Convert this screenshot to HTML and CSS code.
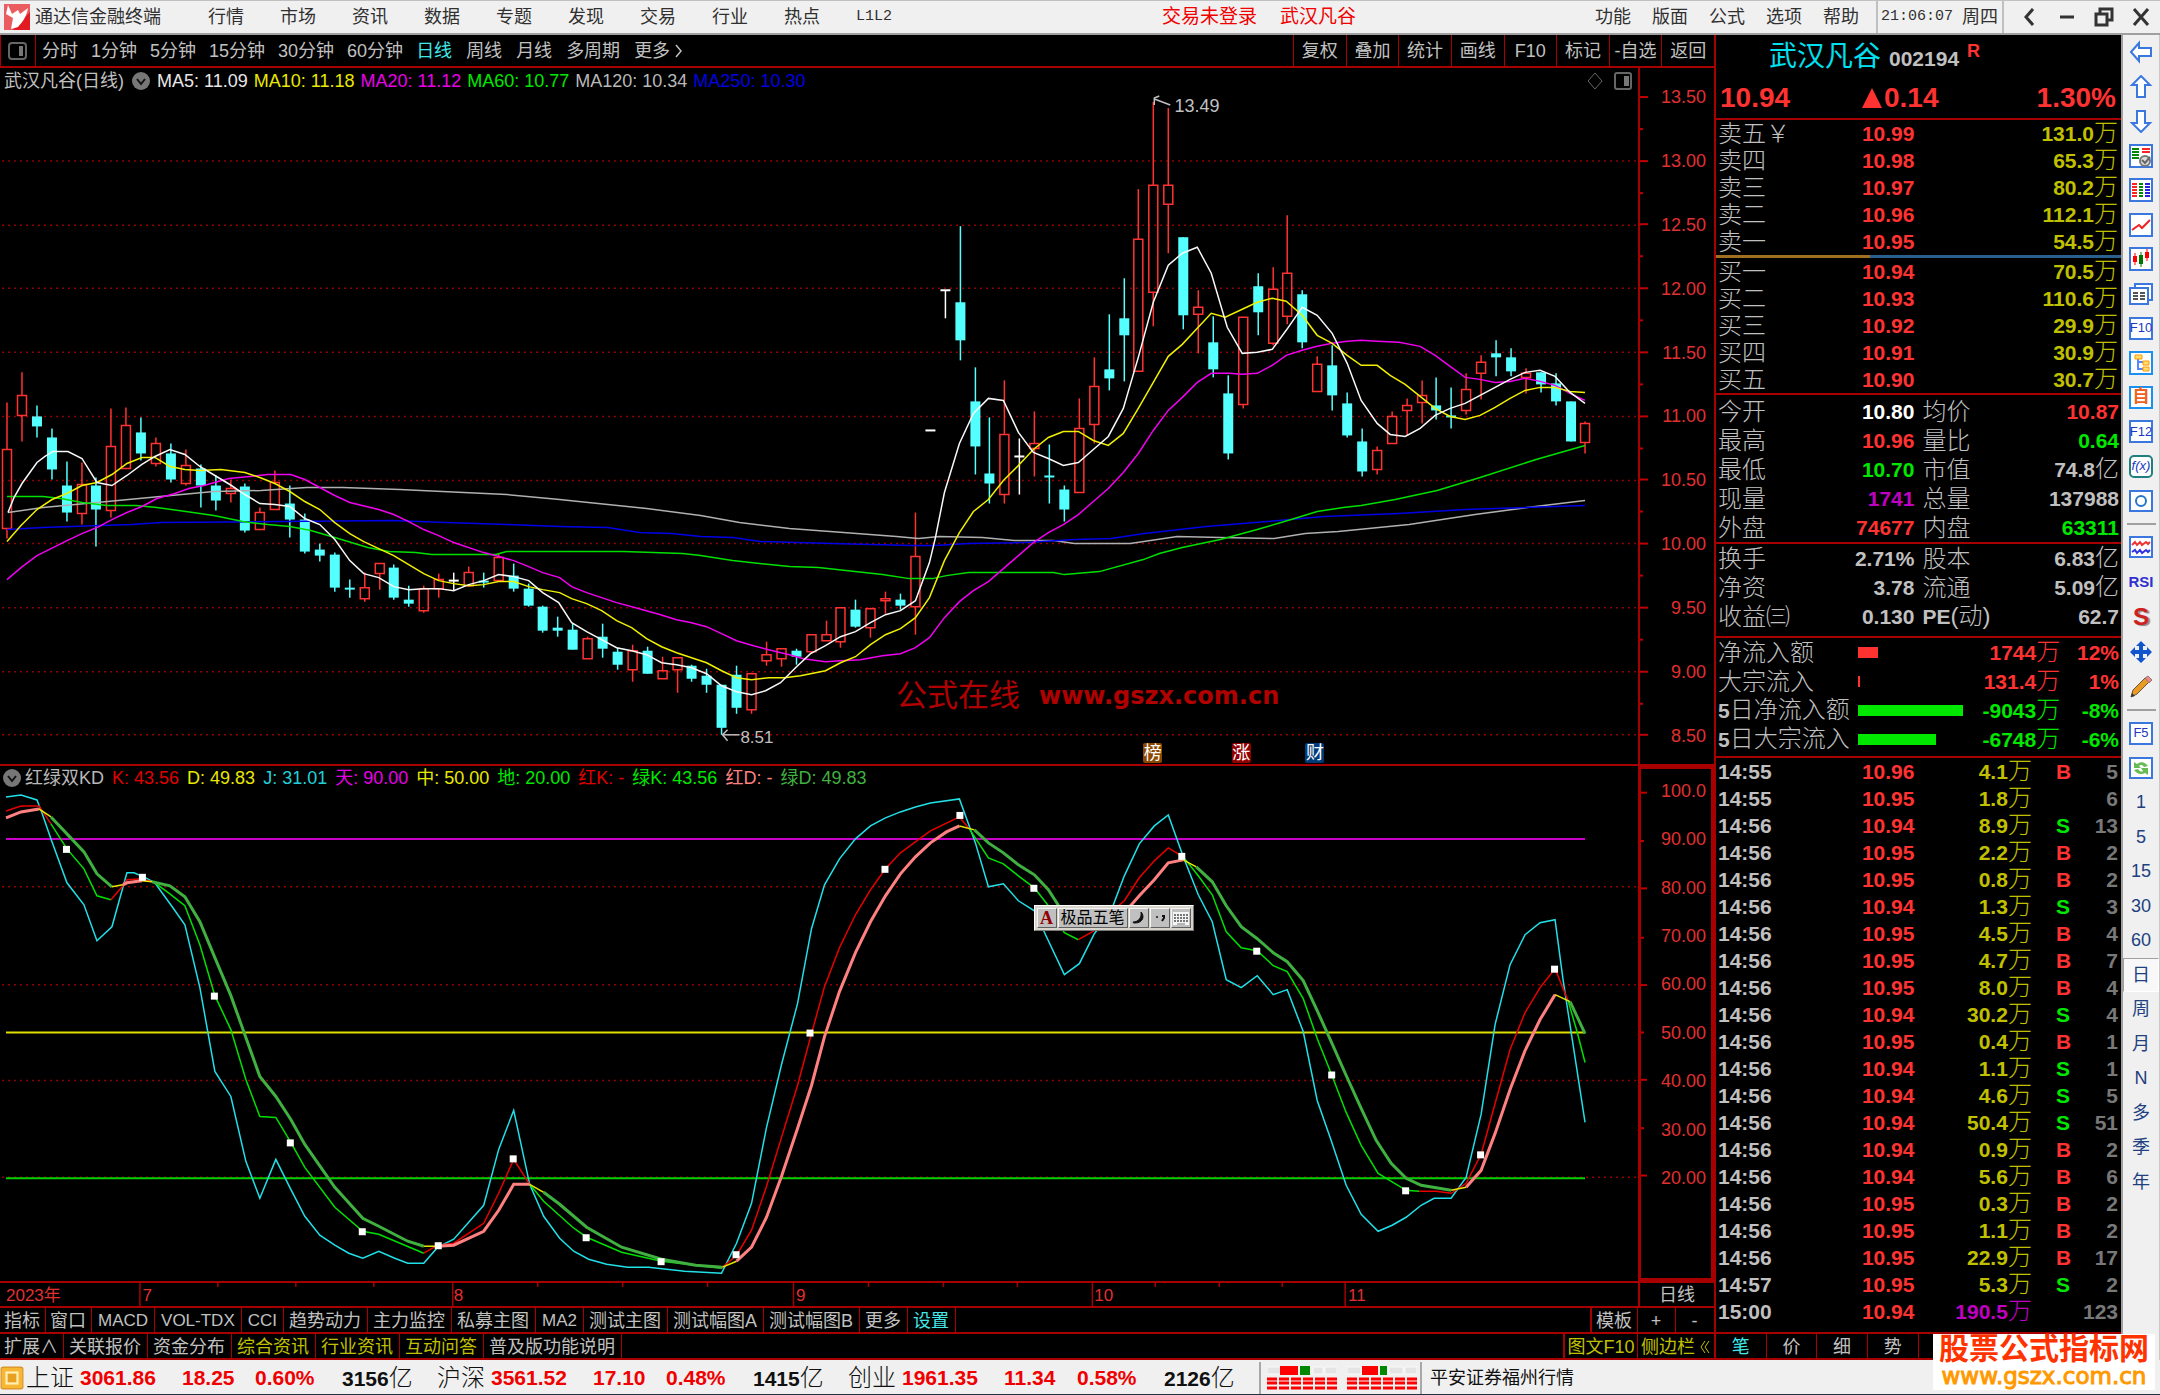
FILE: index.html
```html
<!DOCTYPE html>
<html lang="zh-CN">
<head>
<meta charset="utf-8">
<title>通达信金融终端</title>
<link rel="stylesheet" href="styles.css">
</head>
<body>
<div class="app">
  <header class="topbar">
    <svg class="logo" viewBox="0 0 26 26"><rect width="26" height="26" fill="#e21b22"/><path d="M0 0h26v8L9 26H0z" fill="#f0787a" opacity=".7"/><path d="M4 1l-2 9 7 4-2 11 7-2C19 17 22 14 24 4l-8 6-2-4-6 4z" fill="#fff"/></svg>
    <span class="title">通达信金融终端</span>
    <nav class="menu">
      <a href="#">行情</a><a href="#">市场</a><a href="#">资讯</a><a href="#">数据</a><a href="#">专题</a><a href="#">发现</a><a href="#">交易</a><a href="#">行业</a><a href="#">热点</a><a href="#" class="mono">L1L2</a>
    </nav>
    <div class="notice"><span>交易未登录</span><span>武汉凡谷</span></div>
    <nav class="menu-right"><a href="#">功能</a><a href="#">版面</a><a href="#">公式</a><a href="#">选项</a><a href="#">帮助</a></nav>
    <div class="clock"><span class="mono">21:06:07</span><span>周四</span></div>
    <div class="winctl">
      <button type="button" aria-label="收起"><svg viewBox="0 0 20 20"><path d="M13 2L6 10l7 8" fill="none" stroke="#333" stroke-width="3"/></svg></button>
      <button type="button" aria-label="最小化"><svg viewBox="0 0 20 20"><path d="M3 10h14" stroke="#333" stroke-width="3"/></svg></button>
      <button type="button" aria-label="还原"><svg viewBox="0 0 20 20"><path d="M2 7h11v11H2zM6 6V2h12v11h-5" fill="none" stroke="#333" stroke-width="3"/></svg></button>
      <button type="button" aria-label="关闭"><svg viewBox="0 0 20 20"><path d="M3 2l14 16M17 2L3 18" stroke="#333" stroke-width="3"/></svg></button>
    </div>
  </header>

  <div class="body">
    <main class="left">
      <div class="periodbar">
        <button type="button" class="sidebtn" aria-label="侧栏"><svg viewBox="0 0 20 18"><rect x="1" y="1" width="17" height="16" rx="3" fill="none" stroke="#666" stroke-width="2"/><rect x="11" y="4" width="4" height="10" fill="#777"/></svg></button>
        <div class="periods"><button type="button">分时</button><button type="button">1分钟</button><button type="button">5分钟</button><button type="button">15分钟</button><button type="button">30分钟</button><button type="button">60分钟</button></div>
        <div class="periods second"><button type="button" class="on">日线</button><button type="button">周线</button><button type="button">月线</button><button type="button">多周期</button><button type="button">更多 <svg class="more" viewBox="0 0 8 16"><path d="M1 2l5 6-5 6" fill="none" stroke="#c0c0c0" stroke-width="1.5"/></svg></button></div>
        <div class="tools"><button type="button">复权</button><button type="button">叠加</button><button type="button">统计</button><button type="button">画线</button><button type="button">F10</button><button type="button">标记</button><button type="button">-自选</button><button type="button">返回</button></div>
      </div>

      <section class="chart main-chart">
        <div class="plot">
          <svg id="kline" class="canvas" viewBox="0 68 1639 695" preserveAspectRatio="none"></svg>
          <div class="legend">
            <span class="name">武汉凡谷(日线)</span>
            <svg class="chev" viewBox="0 0 18 18"><circle cx="9" cy="9" r="9" fill="#777"/><path d="M5 7l4 5 4-5" fill="none" stroke="#111" stroke-width="2"/></svg>
            <span class="w">MA5: 11.09</span><span class="y">MA10: 11.18</span><span class="m">MA20: 11.12</span><span class="g">MA60: 10.77</span><span class="s">MA120: 10.34</span><span class="b">MA250: 10.30</span>
            <span class="legend-icons">
              <svg viewBox="0 0 18 18"><path d="M9 1l7 8-7 8-7-8z" fill="none" stroke="#666"/></svg>
              <svg viewBox="0 0 18 18"><rect x="1" y="1" width="16" height="16" rx="2" fill="none" stroke="#666" stroke-width="2"/><rect x="10" y="4" width="5" height="10" fill="#777"/></svg>
            </span>
          </div>
          <span class="mark high">13.49</span>
          <span class="mark low">8.51</span>
          <div class="ink"><span class="ink-cn">公式在线</span><span class="ink-url">www.gszx.com.cn</span></div>
          <span class="tag t1">榜</span><span class="tag t2">涨</span><span class="tag t3">财</span>
        </div>
        <div class="axis">
          <svg id="priceTicks" class="ticks" viewBox="0 68 10 695" preserveAspectRatio="none"></svg>
          <div class="labels price"><span>13.50</span><span>13.00</span><span>12.50</span><span>12.00</span><span>11.50</span><span>11.00</span><span>10.50</span><span>10.00</span><span>9.50</span><span>9.00</span><span>8.50</span></div>
        </div>
      </section>

      <section class="chart sub-chart">
        <div class="plot">
          <svg id="kd" class="canvas" viewBox="0 765 1639 516" preserveAspectRatio="none"></svg>
          <div class="legend sub">
            <svg class="chev" viewBox="0 0 18 18"><circle cx="9" cy="9" r="9" fill="#777"/><path d="M5 7l4 5 4-5" fill="none" stroke="#111" stroke-width="2"/></svg>
            <span class="s">红绿双KD</span><span class="r">K: 43.56</span><span class="y">D: 49.83</span><span class="c">J: 31.01</span><span class="m">天: 90.00</span><span class="y">中: 50.00</span><span class="g">地: 20.00</span><span class="r">红K: -</span><span class="g">绿K: 43.56</span><span class="p">红D: -</span><span class="dg">绿D: 49.83</span>
          </div>
          <div class="ime">
            <button type="button" class="ime-a">A</button><button type="button" class="ime-name">极品五笔</button>
            <button type="button" aria-label="半角"><svg viewBox="0 0 16 18"><path d="M10 3c4 4 2 11-6 11-1 0-2 0-2-1 5 0 9-4 8-10z" fill="#111" stroke="#111"/></svg></button>
            <button type="button" aria-label="标点"><svg viewBox="0 0 16 18"><circle cx="5" cy="8" r="1" fill="#111"/><path d="M10 7h2v2l-2 3" fill="none" stroke="#111" stroke-width="2"/></svg></button>
            <button type="button" aria-label="软键盘"><svg viewBox="0 0 16 18"><rect y="3" width="16" height="13" fill="#f4f4f4"/><path d="M1 6h14M1 9h14M1 12h14" stroke="#777" stroke-width="2" stroke-dasharray="2 1"/><path d="M4 15h8" stroke="#777"/></svg></button>
          </div>
        </div>
        <div class="axis boxed">
          <svg id="kdTicks" class="ticks" viewBox="0 765 10 516" preserveAspectRatio="none"></svg>
          <div class="labels kd"><span>100.0</span><span>90.00</span><span>80.00</span><span>70.00</span><span>60.00</span><span>50.00</span><span>40.00</span><span>30.00</span><span>20.00</span></div>
        </div>
      </section>

      <div class="dates">
        <div class="date-plot">
          <svg id="dateTicks" class="canvas" viewBox="0 0 1639 23" preserveAspectRatio="none"></svg>
          <span class="d0">2023年</span><span class="d7">7</span><span class="d8">8</span><span class="d9">9</span><span class="d10">10</span><span class="d11">11</span>
        </div>
        <span class="date-unit">日线</span>
      </div>

      <div class="tabs">
        <button type="button" class="tight">指标</button><button type="button" class="tight">窗口</button><button type="button" class="latin">MACD</button><button type="button" class="latin">VOL-TDX</button><button type="button" class="latin">CCI</button><button type="button">趋势动力</button><button type="button">主力监控</button><button type="button">私募主图</button><button type="button" class="latin">MA2</button><button type="button">测试主图</button><button type="button">测试幅图A</button><button type="button">测试幅图B</button><button type="button">更多</button><button type="button" class="on">设置</button>
        <span class="end"><button type="button" class="tight">模板</button><button type="button" class="sign">+</button><button type="button" class="sign">-</button></span>
      </div>
      <div class="tabs last">
        <button type="button" class="tight">扩展∧</button><button type="button">关联报价</button><button type="button">资金分布</button><button type="button" class="hot">综合资讯</button><button type="button" class="hot">行业资讯</button><button type="button" class="hot">互动问答</button><button type="button">普及版功能说明</button>
        <span class="end"><button type="button" class="hot f10">图文F10</button><button type="button" class="hot side">侧边栏<svg viewBox="0 0 12 16"><path d="M6 2L2 8l4 6M10 2L6 8l4 6" fill="none" stroke="#c0c000"/></svg></button></span>
      </div>
    </main>

    <aside class="quote">
      <h1 class="stock"><span class="cn">武汉凡谷</span><span class="code">002194</span><sup>R</sup></h1>
      <div class="last-price"><span class="price-now">10.94</span><span class="change"><svg viewBox="0 0 20 20"><path d="M10 0l10 20H0z" fill="#ff3232"/></svg>0.14</span><span class="percent">1.30%</span></div>
      <table class="book" id="asks"></table>
      <div class="ratio"><i></i></div>
      <table class="book" id="bids"></table>
      <table class="facts" id="facts1"></table>
      <table class="facts" id="facts2"></table>
      <table class="flow" id="flow"></table>
      <table class="deals" id="deals"></table>
      <div class="qtabs"><button type="button" class="on">笔</button><button type="button">价</button><button type="button">细</button><button type="button">势</button><i></i><i></i><i></i><i></i></div>
    </aside>

    <aside class="rail">
      <div class="rail-group long">
        <button type="button" aria-label="后退"><svg viewBox="0 0 24 24"><path d="M2 12l8-9v5h12v8H10v5z" class="arrow"/></svg></button>
        <button type="button" aria-label="上移"><svg viewBox="0 0 24 24"><path d="M12 1l9 9h-5v12H8V10H3z" class="arrow"/></svg></button>
        <button type="button" aria-label="下移"><svg viewBox="0 0 24 24"><path d="M12 23l9-9h-5V2H8v12H3z" class="arrow"/></svg></button>
        <button type="button" aria-label="自选报价"><svg viewBox="0 0 24 24"><rect x="1" y="1" width="22" height="22" class="frame"/><path d="M3 5h7M3 8h7M3 11h7M3 14h7" stroke="#080" stroke-width="2"/><path d="M13 5h8M13 8h8" stroke="#f22" stroke-width="2"/><circle cx="16" cy="17" r="5" fill="#ddd" stroke="#777" stroke-width="2"/><path d="M13 16l3 3 5-6" fill="none" stroke="#666" stroke-width="2"/></svg></button>
        <button type="button" aria-label="行情列表"><svg viewBox="0 0 24 24"><rect x="1" y="1" width="22" height="22" class="frame"/><g stroke-width="2" fill="none"><path d="M3 6h5M3 9h5M3 12h5M3 15h5M3 18h5" stroke="#f22"/><path d="M10 6h4M10 9h4M10 12h4M10 15h4M10 18h4" stroke="#080"/><path d="M16 6h5M16 9h5M16 12h5M16 15h5M16 18h5" stroke="#22d"/></g></svg></button>
        <button type="button" aria-label="分时图"><svg viewBox="0 0 24 24"><rect x="1" y="1" width="22" height="22" class="frame"/><path d="M3 17l7-5 3 3 8-8" fill="none" stroke="#e22" stroke-width="2"/></svg></button>
        <button type="button" aria-label="K线图"><svg viewBox="0 0 24 24"><rect x="1" y="1" width="22" height="22" class="frame"/><path d="M6 6v12M18 2v12" stroke="#f00"/><path d="M12 5v15" stroke="#070"/><path d="M4 9h4v6H4zM16 5h4v6h-4z" fill="#f00"/><path d="M10 8h4v9h-4z" fill="#070"/></svg></button>
        <button type="button" aria-label="多窗口"><svg viewBox="0 0 24 24"><path d="M6 6V2h17v16h-4" class="frame"/><rect x="1" y="6" width="18" height="16" class="frame"/><path d="M4 11h5M11 11h5M4 14h5M11 14h5M4 17h5M11 17h5" stroke="#555" stroke-width="2"/></svg></button>
        <button type="button" class="boxed-key">F10</button>
        <button type="button" aria-label="板块树"><svg viewBox="0 0 24 24"><rect x="1" y="1" width="22" height="22" class="frame cyan"/><path d="M9 8v10h5M9 11h5" fill="none" stroke="#58f" stroke-width="2"/><path d="M6 4h7v4H6zM14 10h6v4h-6zM14 16h6v4h-6z" fill="#fd6" stroke="#f90"/></svg></button>
        <button type="button" class="boxed-key self">自</button>
        <button type="button" class="boxed-key">F12</button>
        <button type="button" class="boxed-key fx">f(x)</button>
        <button type="button" aria-label="周期"><svg viewBox="0 0 24 24"><rect x="1" y="2" width="22" height="20" class="frame"/><circle cx="12" cy="12" r="5" fill="none" stroke="#27c" stroke-width="2"/></svg></button>
      </div>
      <hr>
      <div class="rail-group short">
        <button type="button" aria-label="叠加走势"><svg viewBox="0 0 24 24"><rect x="1" y="2" width="22" height="20" class="frame"/><path d="M3 10l3-3 2 3 3-3 2 3 4-3 2 2 2-2" fill="none" stroke="#e33" stroke-width="2"/><path d="M3 17l3-2 2 3 3-3 2 3 4-3 2 2 2-2" fill="none" stroke="#33d" stroke-width="2"/></svg></button>
        <button type="button" class="rsi">RSI</button>
        <button type="button" class="dollar">S</button>
        <button type="button" aria-label="移动"><svg viewBox="0 0 24 24"><path d="M12 1l5 5h-3v4h4V7l5 5-5 5v-3h-4v4h3l-5 5-5-5h3v-4H6v3l-5-5 5-5v3h4V6H7z" fill="#15c"/></svg></button>
        <button type="button" aria-label="画线工具"><svg viewBox="0 0 24 24"><path d="M2 22l2-7L16 3l4 4L8 19z" fill="#e99a20" stroke="#654" /><path d="M16 3l3-2 4 4-3 3z" fill="#e88" stroke="#977"/><path d="M2 22l1-4 3 3z" fill="#333"/></svg></button>
      </div>
      <hr>
      <div class="rail-group long">
        <button type="button" class="boxed-key">F5</button>
        <button type="button" aria-label="刷新"><svg viewBox="0 0 24 24"><rect x="1" y="2" width="22" height="20" class="frame"/><path d="M5 12V6l3 2c4-3 8-2 11 2l-4 1c-2-3-4-2-5-1l2 2zM19 12v7l-3-2c-4 2-8 1-11-3l4-1c2 3 4 3 5 2l-2-3z" fill="#6b5"/></svg></button>
        <button type="button">1</button><button type="button">5</button><button type="button">15</button><button type="button">30</button><button type="button">60</button><button type="button" class="pressed">日</button><button type="button">周</button><button type="button">月</button><button type="button">N</button><button type="button">多</button><button type="button">季</button><button type="button">年</button>
      </div>
    </aside>
  </div>

  <footer class="status">
    <svg class="status-icon" viewBox="0 0 22 22"><rect x="1" y="1" width="20" height="20" rx="2" fill="#f7b733" stroke="#d8912a"/><rect x="5" y="5" width="12" height="12" fill="#fff0b8"/><rect x="7" y="7" width="8" height="8" fill="#e8a020"/></svg>
    <dl class="index"><dt>上证</dt><dd class="c1">3061.86</dd><dd class="c2">18.25</dd><dd class="c3">0.60%</dd><dd class="c4"><b>3156</b>亿</dd></dl>
    <dl class="index"><dt>沪深</dt><dd class="c1">3561.52</dd><dd class="c2">17.10</dd><dd class="c3">0.48%</dd><dd class="c4"><b>1415</b>亿</dd></dl>
    <dl class="index"><dt>创业</dt><dd class="c1">1961.35</dd><dd class="c2">11.34</dd><dd class="c3">0.58%</dd><dd class="c4"><b>2126</b>亿</dd></dl>
    <div class="breadth">
      <svg viewBox="0 0 70 24"><path d="M0 1h14v7H0zM46 1h10v7H46zM58 1h12v7H58z" fill="#e4e4e4" stroke="#fafafa"/><path d="M13 0h18v9H13z" fill="#f00"/><path d="M33 0h10v9H33z" fill="#080"/><path d="M0 13h70M0 17h70M0 22h70" stroke="#f00" stroke-width="3" stroke-dasharray="10 2"/></svg>
      <svg viewBox="0 0 70 24"><path d="M0 1h14v7H0zM42 1h14v7H42zM58 1h12v7H58z" fill="#e4e4e4" stroke="#fafafa"/><path d="M15 0h16v9H15z" fill="#f00"/><path d="M33 0h7v9H33z" fill="#080"/><path d="M0 13h70M0 17h70M0 22h70" stroke="#f00" stroke-width="3" stroke-dasharray="10 2"/></svg>
    </div>
    <span class="server">平安证券福州行情</span>
  </footer>

  <a class="badge" href="#"><span class="badge-cn">股票公式指标网</span><span class="badge-url">www.gszx.com.cn</span></a>
</div>
<script src="app.js"></script>
</body>
</html>
```
FILE: styles.css
```css
* { box-sizing: border-box; }
body {
  margin: 0;
  background: #f0f0f0;
  color: #c0c0c0;
  font: 400 18px/20px "Liberation Sans", "Noto Sans CJK SC", sans-serif;
}
button {
  margin: 0; padding: 0; border: 0; background: none;
  color: inherit; font: inherit; white-space: nowrap;
}
a { color: inherit; text-decoration: none; }
table { border-collapse: separate; border-spacing: 0; width: 100%; }
td, th { padding: 0; font-weight: inherit; text-align: left; white-space: nowrap; }
svg { display: block; }
.mono { font-family: "Liberation Mono", monospace; font-size: 15px; }
.app { position: relative; display: flex; flex-direction: column; min-height: 100vh; }

/* top bar */
.topbar {
  display: flex; align-items: center; height: 35px;
  border-top: 1px solid #c0c0c0; border-bottom: 2px solid #a0a0a0;
  background: #f0f0f0; color: #303030; padding-left: 4px; white-space: nowrap;
}
.logo { width: 26px; height: 26px; margin-right: 5px; }
.title { width: 173px; }
.menu { display: flex; }
.menu a { width: 72px; }
.notice { display: flex; gap: 23px; flex: 1; padding-left: 234px; color: #f00000; font-size: 19px; }
.menu-right { display: flex; gap: 21px; padding-right: 17px; }
.clock {
  display: flex; align-items: center; gap: 9px; height: 32px; padding: 0 4px 0 3px;
  border-left: 2px solid #c0c0c0; border-right: 2px solid #c0c0c0;
}
.winctl { display: flex; gap: 17px; padding: 0 9px 0 16px; }
.winctl svg { width: 20px; height: 20px; }

.body { display: flex; flex: 1; }
.left { flex: 1; min-width: 0; display: flex; flex-direction: column; background: #000; }

/* period bar */
.periodbar { display: flex; height: 33px; border-bottom: 2px solid #a80000; align-items: center; white-space: nowrap; }
.sidebtn { width: 36px; height: 31px; padding-left: 7px; border-left: 1px solid #a80000; border-right: 1px solid #a80000; }
.sidebtn svg { width: 20px; height: 18px; }
.periods { display: flex; gap: 13px; padding-left: 6px; }
.periods.second { gap: 14px; padding-left: 13px; }
.periods .on, .tabs .on, .qtabs .on { color: #40e8e8; }
.more { display: inline-block; width: 8px; height: 16px; vertical-align: -2px; }
.tools { display: grid; grid-template-columns: repeat(8, 1fr); width: 421px; height: 31px; margin-left: auto; }
.tools button { border-left: 1px solid #a80000; }

/* charts */
.chart { display: flex; min-height: 0; }
.main-chart { flex: 697 1 0; border-bottom: 2px solid #a80000; }
.sub-chart { flex: 516 1 0; }
.plot { position: relative; flex: 1; min-width: 0; }
.canvas { position: absolute; left: 0; top: 0; width: 100%; height: 100%; }
.canvas *, .ticks * { vector-effect: non-scaling-stroke; }
.axis { position: relative; width: 76px; border-left: 2px solid #a80000; color: #e03030; }
.axis.boxed { border: 3px solid #a80000; }
.ticks { position: absolute; left: 0; top: 0; width: 10px; height: 100%; }
.labels { display: flex; flex-direction: column; justify-content: space-between; height: 100%; text-align: right; }
.labels.price { padding: 19px 8px 18px 0; }
.labels.kd { padding: 12px 5px 90px 0; }
.legend { position: relative; display: flex; align-items: center; gap: 6px; padding: 3px 6px 0 4px; white-space: nowrap; }
.legend.sub { gap: 4px; padding-top: 2px; padding-left: 3px; }
.legend.sub span { margin-right: 4px; }
.chev { width: 18px; height: 18px; }
.legend .name + .chev { margin: 0 1px 0 2px; }
.legend-icons { display: flex; gap: 10px; margin-left: auto; }
.legend-icons svg { width: 18px; height: 18px; }
.w { color: #e8e8e8; } .y { color: #e8e800; } .m { color: #e800e8; } .g { color: #00e800; }
.s { color: #b8b8b8; } .b { color: #0000e0; } .r { color: #e00000; } .c { color: #20d0d8; }
.p { color: #ff8080; } .dg { color: #40b040; }
.mark, .ink, .tag, .ime { position: absolute; white-space: nowrap; }
.high { left: 71.7%; top: 4%; }
.low { left: 45.2%; top: 94.8%; font-size: 17px; }
.ink { left: 54.7%; top: 87.4%; display: flex; align-items: center; gap: 19px; color: #b00000; line-height: 40px; }
.ink-cn { font: 400 31px/40px "Liberation Serif", "Noto Sans CJK SC", serif; }
.ink-url { font: bold 24px/40px "DejaVu Sans", sans-serif; }
.tag { top: 97%; width: 19px; line-height: 20px; color: #fff; text-align: center; border-radius: 2px; }
.t1 { left: 69.8%; background: #8a4800; }
.t2 { left: 75.2%; background: #900000; }
.t3 { left: 79.7%; background: #003a78; }
.ime {
  left: 63.1%; top: 27%; display: flex; gap: 1px; padding: 2px; height: 26px;
  background: #d8d4cc; border: 1px solid #fff; border-bottom-color: #777; border-right-color: #777;
}
.ime button {
  height: 20px; min-width: 20px; padding: 0 1px; color: #000; background: #c0c0c0; font-size: 16px; line-height: 18px;
  border: 1px solid #f4f4f4; border-right-color: #606060; border-bottom-color: #606060;
}
.ime .ime-name { padding: 0 2px; }
.ime .ime-a { color: #900000; font-family: "Liberation Serif", serif; font-size: 18px; font-weight: bold; }
.ime svg { width: 16px; height: 18px; }

/* date axis */
.dates { display: flex; height: 25px; border-top: 2px solid #a80000; }
.date-plot { position: relative; flex: 1; color: #e03030; line-height: 26px; }
.date-plot span { position: absolute; top: 0; font-size: 17px; }
.d0 { left: 6px; } .d7 { left: 8.7%; } .d8 { left: 27.7%; } .d9 { left: 48.6%; } .d10 { left: 66.8%; } .d11 { left: 82.3%; }
.date-unit { width: 76px; border-left: 2px solid #a80000; text-align: center; line-height: 24px; }

/* tab rows */
.tabs { display: flex; height: 26px; border-top: 2px solid #a80000; }
.tabs button { padding: 2px 6px 0 5px; border-right: 1px solid #a80000; }
.tabs button.latin { padding: 2px 6px 0; font-size: 17px; }
.tabs button.tight { padding: 2px 5px 0 4px; }
.tabs.last { height: 28px; border-bottom: 2px solid #a80000; }
.tabs .end { display: flex; margin-left: auto; border-left: 2px solid #a80000; }
.tabs .end .sign { width: 38px; }
.tabs .end button:last-child { border-right: 0; }
.tabs .hot { color: #c0c000; }
.tabs .f10 { width: 73px; padding: 2px 0 0; }
.tabs .side { width: 76px; padding: 2px 0 0 3px; display: flex; align-items: center; gap: 4px; }
.side svg { width: 12px; height: 16px; }

/* quote panel */
.quote {
  width: 409px; display: flex; flex-direction: column; background: #000;
  border-left: 2px solid #a80000; border-right: 2px solid #a0a0a0;
}
.stock { display: flex; align-items: center; height: 43px; margin: 0; padding-left: 53px; font: inherit; white-space: nowrap; }
.stock .cn { color: #00e0f0; font-size: 28px; line-height: 40px; font-weight: 400; }
.stock .code { margin: 4px 8px 0 8px; font-size: 21px; font-weight: bold; }
.stock sup { color: #ff3232; font-size: 18px; line-height: 20px; font-weight: bold; align-self: flex-start; padding-top: 6px; }
.last-price {
  display: flex; align-items: center; height: 42px;
  padding: 0 5px 0 4px; border-bottom: 2px solid #a80000; color: #ff3232; font: bold 28px/40px "Liberation Sans", sans-serif;
}
.price-now { width: 142px; }
.change { display: flex; align-items: center; gap: 2px; }
.change svg { width: 20px; height: 20px; }
.percent { margin-left: auto; }
.quote table { font-size: 24px; line-height: 26px; table-layout: fixed; }
.quote td:first-child, .quote th:first-child { padding-left: 2px; }
.quote td, .quote th { font-weight: 300; }
.quote b { font-size: 21px; font-weight: bold; }
.quote .num { text-align: right; }
.book tr { height: 27px; }
.book .vol { color: #c0c000; padding-right: 3px; }
.up { color: #ff3232; } .down { color: #00e800; } .deal { color: #c000c0; } .flat { color: #fff; }
.ratio { height: 3px; background: #2a6090; }
.ratio i { display: block; height: 3px; width: 38%; background: #a07020; }
.facts { border-top: 2px solid #a80000; }
.facts tr, .flow tr { height: 29px; }
#facts1 { padding-top: 2px; }
#facts2 { padding-bottom: 5px; }
.facts td.second { padding-left: 8px; }
.facts .num:last-child { padding-right: 2px; }
.flow { border-top: 2px solid #a80000; padding-bottom: 2px; }
.flow i { display: block; height: 11px; background: #00e800; }
.flow .up i { background: #ff3232; }
.flow th { color: #c0c0c0; }
.flow .num:last-child { padding-right: 2px; }
.deals { border-top: 2px solid #a80000; }
.deals tr { height: 27px; }
.deals .amt { color: #c0c000; }
.deals .amt.deal { color: #c000c0; }
.deals .side-flag { padding-left: 24px; }
.deals .cnt { color: #787878; padding-right: 3px; }
.qtabs { display: grid; grid-template-columns: repeat(8, 1fr); height: 28px; margin-top: auto; border-top: 2px solid #a80000; border-bottom: 2px solid #a80000; }
.qtabs > * { border-right: 1px solid #a80000; }
.qtabs button { padding-top: 2px; }

/* right tool rail */
.rail { width: 37px; background: #f0f0f0; color: #204080; border-right: 1px solid #c8c8c8; }
.rail hr { height: 2px; margin: 5px 3px 5px 4px; border: 0; background: #a0a0a0; }
.rail-group { display: grid; grid-auto-rows: 1fr; }
.rail-group.long { height: 483px; }
.rail-group.short { height: 174px; }
.rail button { display: flex; align-items: center; justify-content: center; }
.rail svg { width: 24px; height: 24px; }
.arrow { fill: #fff; stroke: #3a78e0; stroke-width: 2; }
.frame { fill: #fff; stroke: #3a78e0; stroke-width: 2; }
.frame.cyan { stroke: #1a90f0; }
.rail .boxed-key { align-self: center; justify-self: center; width: 24px; height: 23px; border: 2px solid #3a78e0; background: #fff; color: #2038c0; font-size: 13px; }
.rail .self { color: #f06020; font-size: 17px; font-weight: bold; border-color: #1a90f0; }
.rail .fx { color: #2038c0; font-style: italic; border-color: #208080; border-radius: 5px; }
.rail .rsi { color: #3030d0; font-size: 15px; font-weight: bold; }
.rail .dollar { color: #d02020; font-size: 24px; font-weight: bold; text-shadow: 2px 1px 1px #888; }
.rail .pressed { background: #f8f8f8; border: 1px solid #a0a0a0; border-right-color: #fff; border-bottom-color: #fff; }

/* status bar */
.status {
  display: flex; align-items: center; height: 35px; padding-top: 2px; background: #f0f0f0; color: #101010;
  border-bottom: 1px solid #203040; white-space: nowrap;
}
.status-icon { width: 24px; height: 24px; margin-right: 2px; }
.index { display: flex; align-items: center; margin: 0; width: 411px; font-size: 24px; line-height: 32px; font-weight: 300; }
.index dd { margin: 0; }
.index dt { width: 54px; }
.index .c1, .index .c2, .index .c3 { color: #f00000; font-size: 21px; font-weight: bold; }
.index b { font-size: 21px; font-weight: bold; }
.c1 { width: 102px; } .index .c2 { width: 73px; } .index .c3 { width: 87px; }
.breadth { display: flex; gap: 10px; align-items: center; height: 32px; padding: 0 3px 0 6px; border-left: 2px solid #a8a8a8; border-right: 2px solid #a8a8a8; }
.breadth svg { width: 70px; height: 24px; }
.server { padding-left: 8px; }

/* site badge */
.badge {
  position: absolute; right: 5px; bottom: 5px; width: 222px; height: 56px; background: #fff;
  display: flex; flex-direction: column; align-items: center;
}
.badge-cn { color: #ff3300; font-size: 30px; font-weight: bold; line-height: 30px; }
.badge-url { color: #ff9900; font: 23px/24px "DejaVu Sans", sans-serif; -webkit-text-stroke: 1px #ff9900; }
```
FILE: app.js
```js
const NS = 'http://www.w3.org/2000/svg';
function add(svg, name, attrs) {
  const el = document.createElementNS(NS, name);
  for (const k in attrs) el.setAttribute(k, attrs[k]);
  svg.appendChild(el);
}
const line = (svg, pts, color, width) =>
  add(svg, 'polyline', { points: pts, fill: 'none', stroke: color, 'stroke-width': width || 1.5 });
const seg = (svg, x1, y1, x2, y2, color, width, dash) =>
  add(svg, 'path', Object.assign({ d: `M${x1} ${y1}L${x2} ${y2}`, stroke: color, 'stroke-width': width || 1.5 }, dash ? { 'stroke-dasharray': dash } : {}));

/* kind, high, body top, body bottom, low (chart units); r = rise, c = fall, w = unchanged */
const candles = `r402,449,528,538 r372,395,415,441 c405,416,426,437 c428,437,469,479 c461,485,512,521 r462,484,513,524
c477,485,509,546 r408,446,510,517 r407,425,468,468 c417,432,453,460 r437,443,463,466 c443,453,479,482 r449,465,483,485
c464,468,485,507 c475,485,500,510 r479,488,493,502 c483,486,530,532 r507,512,529,529 r470,482,509,509 c485,503,519,537
c513,519,551,553 c543,549,555,561 c552,554,587,591 c579,587,589,597 r572,587,598,601 r563,563,573,589 c564,567,597,599
c585,599,603,606 r585,588,610,612 r573,579,588,597 w572,580,580,590 r566,572,585,585 c572,581,581,587 r553,557,580,581
c563,575,588,591 c583,588,605,606 c605,606,630,632 c616,627,630,636 c623,629,649,649 r636,638,658,658 c623,636,648,657
c647,651,664,669 r644,650,669,681 c646,650,673,673 r656,670,678,678 r657,657,669,692 c664,665,678,681 c668,675,684,692
c684,684,727,734 c665,674,707,713 r672,673,709,713 r641,654,660,665 r648,648,658,666 c648,650,656,664 r634,634,651,653
r620,634,640,640 r607,607,641,647 c599,609,626,627 r607,608,627,637 r591,598,600,613 c593,599,605,609 r512,556,606,634
w430,430,430,430 w290,290,290,318 c226,302,340,360 c367,401,446,474 c417,473,483,503 r380,434,494,503 w438,456,456,494
r411,443,448,476 c444,476,477,503 c485,489,509,521 r398,428,492,492 r357,386,424,443 c314,369,378,390 c278,318,335,381
r189,239,371,371 r102,185,292,326 r108,185,204,253 c237,237,315,329 r290,307,314,353 c316,342,369,377 c375,393,453,459
r317,317,404,408 c273,286,312,335 r267,289,343,345 r215,273,316,324 c290,294,342,348 r356,364,391,391 c345,365,395,410
c392,403,435,437 c428,441,471,476 r446,450,469,474 r411,416,443,443 r398,405,410,435 r380,395,402,423 c377,405,410,419
c387,416,417,428 r373,389,410,414 r355,362,373,399 c340,353,357,376 c348,357,371,376 r368,373,377,393 c372,372,384,392
c373,383,401,405 c401,401,441,441 r421,423,442,453`.split(/\s+/);

const k = document.getElementById('kline');
for (let i = 0; i <= 9; i++) {
  const y = Math.round(161 + i * 63.7);
  seg(k, 2, y, 1639, y, '#900000', 1.5, '2 4');
}
candles.forEach((s, i) => {
  const [hi, top, bot, lo] = s.slice(1).split(',').map(Number);
  const x = Math.round(7 + i * 14.9);
  if (s[0] === 'r') {
    seg(k, x, hi, x, top, '#ff3232');
    seg(k, x, bot, x, lo, '#ff3232');
    add(k, 'rect', { x: x - 4.5, y: top, width: 9, height: Math.max(bot - top, 2), fill: 'none', stroke: '#ff3232', 'stroke-width': 1.5 });
  } else {
    const color = s[0] === 'c' ? '#54ffff' : '#ffffff';
    if (lo > hi) seg(k, x, hi, x, lo, color);
    if (bot - top < 2) seg(k, x - 5, top, x + 5, top, color, 2);
    else add(k, 'rect', { x: x - 5, y: top, width: 10, height: bot - top, fill: color });
  }
});
line(k, '8,512 43,507 97,502 118,500 171,495 214,491 261,490 307,487 343,487 400,489 464,492 507,494 560,499 579,501 647,508 701,515 740,522 790,528 844,532 897,536 919,538 940,536 983,537 1015,540 1054,540 1075,543 1131,543 1178,536 1221,537 1275,538 1306,533 1339,531 1410,524 1476,514 1528,507 1586,500', '#b0b0b0');
line(k, '7,529 43,527 100,525 132,524 161,522 279,521 393,520 446,522 507,524 560,526 608,527 640,532 672,533 701,536 733,537 761,541 833,543 911,545 936,545 969,543 1026,542 1076,539 1112,538 1145,533 1207,526 1268,521 1325,516 1400,513 1466,509 1586,505', '#0000e8');
line(k, '7,496 43,496 61,498 82,502 107,505 136,505 157,507 186,511 214,515 243,521 268,524 290,526 311,530 335,537 368,547 389,551 416,552 432,554 496,554 507,551 560,551 624,551 683,553 701,555 733,560 790,566 819,567 883,574 910,578 933,578 947,575 969,572 1054,572 1065,574 1100,571 1144,559 1160,553 1183,547 1221,539 1258,529 1292,519 1318,511 1344,507 1362,505 1396,499 1438,490 1481,477 1537,459 1586,445', '#00e000');
line(k, '7,579 21,567 37,555 53,547 67,540 82,533 97,527 112,519 127,512 142,506 157,498 175,493 189,488 204,485 229,478 250,476 268,474 291,474 305,479 320,487 335,495 350,502 379,509 394,514 409,521 424,529 439,535 454,542 484,552 499,556 514,560 529,566 543,572 560,577 572,586 587,592 617,602 636,607 661,614 677,619 692,622 707,626 722,633 737,640 754,645 769,649 790,654 804,658 826,661 841,660 861,659 883,655 901,653 916,647 930,637 945,617 960,601 974,590 989,581 1004,568 1019,555 1034,542 1049,532 1064,524 1079,514 1094,501 1109,488 1124,472 1139,453 1154,430 1169,410 1183,397 1198,382 1212,373 1230,373 1243,374 1258,373 1273,365 1287,355 1303,350 1318,346 1333,343 1348,341 1362,340 1378,341 1400,342 1421,346 1436,355 1451,366 1466,377 1481,379 1496,382 1511,381 1526,378 1541,381 1556,385 1571,393 1586,400', '#f000f0');
line(k, '7,541 21,525 37,509 52,499 67,493 82,485 97,482 112,474 127,463 142,457 155,457 170,466 185,469 200,470 221,469 245,472 260,477 275,483 290,491 305,501 320,509 335,522 350,533 364,541 379,548 394,555 409,564 424,573 439,580 454,583 469,585 484,584 499,581 514,581 529,586 543,589 560,592 572,598 587,603 602,610 617,620 632,627 647,638 662,646 677,652 692,657 707,662 722,670 737,677 752,679 769,677 785,677 801,675 811,673 826,670 841,662 856,656 871,644 886,634 901,628 916,617 930,597 945,560 960,532 974,511 989,499 1004,480 1019,465 1034,449 1049,437 1064,431 1079,431 1094,440 1109,445 1124,433 1139,408 1154,382 1169,356 1183,344 1198,328 1212,313 1226,317 1243,309 1258,302 1273,298 1287,301 1303,315 1318,335 1333,343 1348,355 1362,365 1378,365 1391,375 1406,384 1421,396 1436,408 1451,416 1466,419 1481,415 1496,407 1511,398 1526,390 1541,387 1556,387 1571,391 1586,392', '#f0f000');
line(k, '8,512 14,497 22,483 37,462 45,456 53,451 68,451 82,458 97,482 112,485 127,475 142,464 155,456 170,449 185,454 200,466 215,475 230,484 245,494 260,503 275,504 290,506 305,518 320,524 335,539 350,560 364,573 379,577 394,586 409,589 424,588 439,588 454,590 469,584 484,580 499,574 514,576 529,580 543,592 559,602 572,622 587,631 602,639 617,647 632,650 647,654 662,662 677,664 692,667 707,673 722,685 737,691 752,694 766,690 781,682 796,667 811,653 826,645 841,636 856,631 871,622 886,614 901,610 916,600 930,562 936,537 945,492 960,443 974,413 989,398 1004,400 1019,432 1034,452 1049,458 1064,465 1079,462 1094,449 1109,436 1124,408 1139,357 1154,302 1169,265 1183,253 1198,247 1212,273 1228,327 1243,353 1258,352 1273,349 1287,330 1303,307 1318,315 1333,333 1348,363 1362,400 1378,423 1391,434 1406,436 1421,428 1436,415 1451,408 1466,403 1481,395 1496,387 1511,379 1526,372 1541,370 1556,376 1571,392 1586,403', '#f8f8f8');
line(k, '1171,105 1155,99', '#c0c0c0');
line(k, '1155,105 1155,98 1160,96', '#c0c0c0');
line(k, '740,734 723,734', '#c0c0c0');
line(k, '728,729 723,734 728,740', '#c0c0c0');

const pt = document.getElementById('priceTicks');
for (let i = 0; i <= 20; i++) {
  const y = Math.round(97 + i * 31.87);
  seg(pt, 0, y, i % 2 ? 3 : 8, y, '#c00000', 2);
}

const s = document.getElementById('kd');
[886, 984, 1080, 1177].forEach(y => seg(s, 2, y, 1639, y, '#900000', 1.5, '2 4'));
seg(s, 6, 838, 1586, 838, '#c800c8', 2);
seg(s, 6, 1032, 1586, 1032, '#e0e000', 2);
seg(s, 6, 1178, 1586, 1178, '#00d000', 2);
line(s, '6,796 21,794 37,799 42,812 51,838 67,882 84,904 97,940 112,926 127,872 134,872 144,876 155,882 173,907 185,924 200,987 215,1071 231,1096 246,1161 260,1198 276,1159 291,1189 305,1216 320,1235 335,1245 349,1253 363,1258 379,1251 395,1258 408,1263 424,1263 438,1247 454,1239 469,1222 484,1205 499,1149 514,1110 530,1184 544,1216 560,1238 574,1251 589,1259 607,1264 628,1267 649,1267 685,1271 722,1273 737,1243 752,1203 767,1127 782,1064 798,1003 812,928 825,884 840,858 856,838 871,825 886,817 901,811 916,806 931,802 960,798 976,842 989,886 1004,883 1019,900 1035,910 1049,940 1065,974 1080,963 1095,933 1111,912 1125,875 1140,843 1155,825 1169,814 1184,856 1199,894 1213,921 1227,979 1242,987 1258,975 1274,994 1288,989 1304,1031 1318,1100 1332,1140 1347,1185 1362,1214 1379,1231 1393,1225 1407,1217 1422,1205 1435,1198 1452,1198 1467,1177 1482,1114 1496,1024 1511,964 1526,934 1541,922 1556,919 1564,979 1586,1122', '#20e0e8');

const RED = '#e80000', GREEN = '#00e000', PINK = '#ff8080', DG = '#40b040', YEL = '#e8e800';
[
  [RED, '6,810 21,805 39,805 51,823'],
  [GREEN, '51,823 67,848 84,868 97,895 111,899'],
  [RED, '111,899 123,885 127,879 142,878 155,882'],
  [GREEN, '155,882 170,893 185,905 200,944 215,995 231,1029 246,1079 260,1116 276,1117 291,1142 305,1167 335,1207 363,1231 379,1234 424,1253'],
  [RED, '424,1253 438,1245 454,1243 484,1223 499,1193 514,1159 530,1184'],
  [GREEN, '530,1184 544,1201 573,1227 587,1237 622,1252 662,1261 696,1265 722,1268'],
  [RED, '722,1268 737,1255 752,1230 767,1186 782,1137 798,1085 812,1033 825,986 840,947 856,914 871,889 886,868 901,852 931,830 960,816 970,828'],
  [GREEN, '970,828 989,857 1004,863 1019,875 1035,887 1049,905 1065,932 1079,939'],
  [RED, '1079,939 1095,930 1111,912 1125,900 1140,877 1155,860 1169,847 1184,856'],
  [GREEN, '1184,856 1199,875 1213,894 1227,931 1242,947 1258,950 1274,965 1288,971 1304,998 1318,1038 1332,1073 1347,1112 1362,1145 1379,1173 1407,1190 1420,1191'],
  [RED, '1420,1191 1437,1191 1452,1193 1467,1183 1482,1154 1496,1103 1511,1049 1526,1012 1541,987 1556,968 1569,1000'],
  [GREEN, '1569,1000 1578,1031 1586,1062']
].forEach(([c, p]) => line(s, p, c));
[
  [PINK, '6,817 21,811 39,808'],
  [YEL, '39,808 51,816'],
  [DG, '51,816 67,833 84,851 97,873 112,886'],
  [YEL, '112,886 123,884'],
  [PINK, '123,884 127,882 142,880'],
  [YEL, '142,880 152,881'],
  [DG, '152,881 170,885 185,896 200,921 215,957 231,995 246,1037 260,1076 276,1096 291,1119 305,1144 335,1187 363,1218 379,1226 408,1241 424,1246'],
  [YEL, '424,1246 438,1246'],
  [PINK, '438,1246 454,1245 484,1231 499,1210 514,1184 530,1184'],
  [YEL, '530,1184 544,1192'],
  [DG, '544,1192 560,1204 587,1227 622,1247 662,1259 696,1265 723,1267'],
  [YEL, '723,1267 737,1261'],
  [PINK, '737,1261 752,1247 767,1217 782,1176 798,1128 812,1085 825,1036 840,991 856,952 871,921 886,895 901,873 916,856 931,842 947,831 960,825'],
  [YEL, '960,825 975,829'],
  [DG, '975,829 989,842 1004,852 1019,864 1035,874 1049,889 1058,903 1065,914'],
  [PINK, '1125,912 1133,903 1140,895 1155,879 1169,862 1184,859'],
  [YEL, '1184,859 1197,866'],
  [DG, '1197,866 1213,881 1227,905 1242,926 1258,938 1274,952 1288,961 1304,980 1318,1010 1332,1041 1347,1075 1362,1108 1377,1140 1392,1163 1407,1178 1422,1185 1452,1190'],
  [YEL, '1452,1190 1467,1187'],
  [PINK, '1467,1187 1482,1170 1496,1133 1511,1089 1526,1050 1541,1019 1556,994'],
  [YEL, '1556,994 1571,1001'],
  [DG, '1571,1001 1586,1033']
].forEach(([c, p]) => line(s, p, c, c === YEL ? 1.5 : 3));
'67,848 143,876 215,995 291,1142 363,1231 439,1245 514,1158 587,1237 662,1261 737,1254 811,1032 886,868 961,814 1035,887 1183,855 1258,950 1333,1074 1407,1190 1482,1154 1556,968'.split(' ').forEach(p => {
  const [x, y] = p.split(',');
  add(s, 'rect', { x: x - 4, y: y - 3, width: 7, height: 7, fill: '#fff' });
});

const kt = document.getElementById('kdTicks');
[789, 838, 886, 936, 984, 1032, 1080, 1129, 1177].forEach((y, i) => seg(kt, 0, y, i % 2 ? 3 : 6, y, '#c00000', 2));

const d = document.getElementById('dateTicks');
[140, 453, 794, 1093, 1346].forEach(x => seg(d, x, 0, x, 23, '#a80000', 1.5));
[218, 296, 374, 538, 623, 708, 869, 944, 1018, 1156, 1220, 1283].forEach(x => seg(d, x, 0, x, 4, '#a80000', 1.5));

/* figures are bold and a size smaller than the Chinese unit that follows them */
const fig = t => t.replace(/[-\d.:%]+|PE|[BS]$/g, '<b>$&</b>');
const fill = (id, html) => { document.getElementById(id).innerHTML = html; };

const bookCols = '<colgroup><col style="width:25%"><col style="width:24%"><col></colgroup>';
const book = rows => bookCols + rows.map(([n, p, v]) =>
  `<tr><th>${n}</th><td class="num up">${fig(p)}</td><td class="num vol">${fig(v)}</td></tr>`).join('');
fill('asks', book([['卖五￥', '10.99', '131.0万'], ['卖四', '10.98', '65.3万'], ['卖三', '10.97', '80.2万'], ['卖二', '10.96', '112.1万'], ['卖一', '10.95', '54.5万']]));
fill('bids', book([['买一', '10.94', '70.5万'], ['买二', '10.93', '110.6万'], ['买三', '10.92', '29.9万'], ['买四', '10.91', '30.9万'], ['买五', '10.90', '30.7万']]));

const facts = rows => '<colgroup><col style="width:24%"><col style="width:25%"><col style="width:22%"><col></colgroup>' + rows.map(([a, b, bc, c, e, ec]) =>
  `<tr><td>${a}</td><td class="num ${bc}">${fig(b)}</td><td class="second">${fig(c)}</td><td class="num ${ec}">${fig(e)}</td></tr>`).join('');
fill('facts1', facts([
  ['今开', '10.80', 'flat', '均价', '10.87', 'up'],
  ['最高', '10.96', 'up', '量比', '0.64', 'down'],
  ['最低', '10.70', 'down', '市值', '74.8亿', ''],
  ['现量', '1741', 'deal', '总量', '137988', ''],
  ['外盘', '74677', 'up', '内盘', '63311', 'down']]));
fill('facts2', facts([
  ['换手', '2.71%', '', '股本', '6.83亿', ''],
  ['净资', '3.78', '', '流通', '5.09亿', ''],
  ['收益㈢', '0.130', '', 'PE(动)', '62.7', '']]));
fill('flow', '<colgroup><col style="width:35%"><col style="width:26%"><col style="width:24%"><col></colgroup>' + [
  ['净流入额', 20, '1744万', '12%', 'up'],
  ['大宗流入', 2, '131.4万', '1%', 'up'],
  ['5日净流入额', 105, '-9043万', '-8%', 'down'],
  ['5日大宗流入', 78, '-6748万', '-6%', 'down']].map(([n, w, v, p, c]) =>
  `<tr class="${c}"><th>${fig(n)}</th><td><i style="width:${w}px"></i></td><td class="num">${fig(v)}</td><td class="num">${fig(p)}</td></tr>`).join(''));

const deals = `14:55 10.96 4.1 B 5|14:55 10.95 1.8 - 6|14:56 10.94 8.9 S 13|14:56 10.95 2.2 B 2|14:56 10.95 0.8 B 2|14:56 10.94 1.3 S 3|14:56 10.95 4.5 B 4|14:56 10.95 4.7 B 7|14:56 10.95 8.0 B 4|14:56 10.94 30.2 S 4|14:56 10.95 0.4 B 1|14:56 10.94 1.1 S 1|14:56 10.94 4.6 S 5|14:56 10.94 50.4 S 51|14:56 10.94 0.9 B 2|14:56 10.94 5.6 B 6|14:56 10.95 0.3 B 2|14:56 10.95 1.1 B 2|14:56 10.95 22.9 B 17|14:57 10.95 5.3 S 2|15:00 10.94 190.5 - 123`;
fill('deals', '<colgroup><col style="width:24%"><col style="width:25%"><col style="width:29%"><col style="width:12%"><col></colgroup>' + deals.split('|').map(r => {
  const [t, p, v, f, n] = r.split(' ');
  return `<tr><td>${fig(t)}</td><td class="num up">${fig(p)}</td><td class="num amt${v === '190.5' ? ' deal' : ''}">${fig(v + '万')}</td><td class="side-flag ${f === 'S' ? 'down' : 'up'}">${f === '-' ? '' : fig(f)}</td><td class="num cnt">${fig(n)}</td></tr>`;
}).join(''));
```
